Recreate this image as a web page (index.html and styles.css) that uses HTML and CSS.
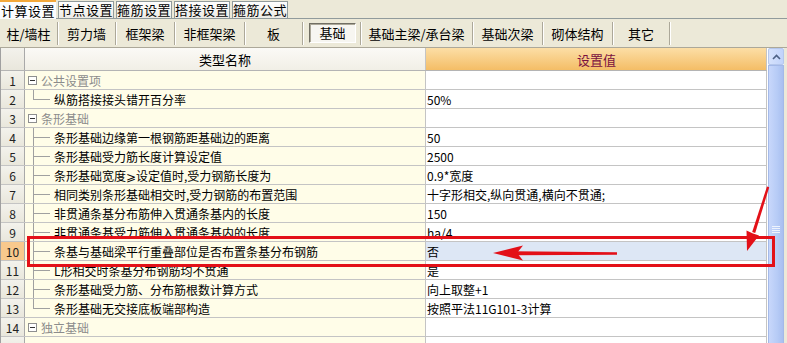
FILE: index.html
```html
<!DOCTYPE html>
<html lang="zh-CN">
<head>
  <meta charset="UTF-8" />
  <title>计算设置</title>
  <link rel="stylesheet" href="styles.css">
</head>
<body>
  <div class="tabs">
    <div class="tab active">计算设置</div>
    <div class="tab">节点设置</div>
    <div class="tab">箍筋设置</div>
    <div class="tab">搭接设置</div>
    <div class="tab">箍筋公式</div>
  </div>

  <div class="toolbar">
    <div class="tool w58">柱/墙柱</div>
    <div class="tool w58">剪力墙</div>
    <div class="tool w59">框架梁</div>
    <div class="tool w70">非框架梁</div>
    <div class="tool w58">板</div>
    <div class="tool w58"><span class="pressed">基础</span></div>
    <div class="tool w112">基础主梁/承台梁</div>
    <div class="tool w70">基础次梁</div>
    <div class="tool w70">砌体结构</div>
    <div class="tool w57">其它</div>
  </div>

  <div class="table-area">
    <div class="grid">
      <div class="row head">
        <div class="num"></div>
        <div class="name">类型名称</div>
        <div class="val">设置值</div>
      </div>
      <div class="row">
        <div class="num">1</div>
        <div class="name group"><span class="minus"></span>公共设置项</div>
        <div class="val"></div>
      </div>
      <div class="row">
        <div class="num">2</div>
        <div class="name"><span class="tree last"></span>纵筋搭接接头错开百分率</div>
        <div class="val">50%</div>
      </div>
      <div class="row">
        <div class="num">3</div>
        <div class="name group"><span class="minus"></span>条形基础</div>
        <div class="val"></div>
      </div>
      <div class="row">
        <div class="num">4</div>
        <div class="name"><span class="tree"></span>条形基础边缘第一根钢筋距基础边的距离</div>
        <div class="val">50</div>
      </div>
      <div class="row">
        <div class="num">5</div>
        <div class="name"><span class="tree"></span>条形基础受力筋长度计算设定值</div>
        <div class="val">2500</div>
      </div>
      <div class="row">
        <div class="num">6</div>
        <div class="name"><span class="tree"></span>条形基础宽度⩾设定值时,受力钢筋长度为</div>
        <div class="val">0.9*宽度</div>
      </div>
      <div class="row">
        <div class="num">7</div>
        <div class="name"><span class="tree"></span>相同类别条形基础相交时,受力钢筋的布置范围</div>
        <div class="val">十字形相交,纵向贯通,横向不贯通;</div>
      </div>
      <div class="row">
        <div class="num">8</div>
        <div class="name"><span class="tree"></span>非贯通条基分布筋伸入贯通条基内的长度</div>
        <div class="val">150</div>
      </div>
      <div class="row">
        <div class="num">9</div>
        <div class="name"><span class="tree"></span>非贯通条基受力筋伸入贯通条基内的长度</div>
        <div class="val">ha/4</div>
      </div>
      <div class="row current">
        <div class="num">10</div>
        <div class="name"><span class="tree"></span>条基与基础梁平行重叠部位是否布置条基分布钢筋</div>
        <div class="val">否</div>
      </div>
      <div class="row">
        <div class="num">11</div>
        <div class="name"><span class="tree"></span>L形相交时条基分布钢筋均不贯通</div>
        <div class="val">是</div>
      </div>
      <div class="row">
        <div class="num">12</div>
        <div class="name"><span class="tree"></span>条形基础受力筋、分布筋根数计算方式</div>
        <div class="val">向上取整+1</div>
      </div>
      <div class="row">
        <div class="num">13</div>
        <div class="name"><span class="tree last"></span>条形基础无交接底板端部构造</div>
        <div class="val">按照平法11G101-3计算</div>
      </div>
      <div class="row">
        <div class="num">14</div>
        <div class="name group"><span class="minus"></span>独立基础</div>
        <div class="val"></div>
      </div>
      <div class="row">
        <div class="num"></div>
        <div class="name"></div>
        <div class="val"></div>
      </div>
    </div>

    <div class="vscroll">
      <div class="sb-btn">
        <svg width="9" height="6" viewBox="0 0 9 6"><path d="M1 5 L4.5 1.5 L8 5" fill="none" stroke="#4d6185" stroke-width="1.6"/></svg>
      </div>
      <div class="sb-thumb"><span class="grip"></span></div>
    </div>
  </div>

  <svg class="marks" width="787" height="343" viewBox="0 0 787 343">
    <rect x="28.5" y="237.5" width="745" height="28" fill="none" stroke="#e31018" stroke-width="3"/>
    <polygon points="617,252.2 617,254.8 514,255.2 514,251.2" fill="#e31018"/>
    <polygon points="493,253 523,245.5 517,253 523,260.5" fill="#e31018"/>
    <polygon points="767,186.5 769.2,187.3 755.2,233 752.2,232" fill="#e31018"/>
    <polygon points="747,251 746.5,230.5 753,233.5 759,235.5" fill="#e31018"/>
  </svg>
</body>
</html>
```

FILE: styles.css
```css
* {
  box-sizing: border-box;
  margin: 0; padding: 0;
}

body {
  width: 787px;
  height: 343px;
  overflow: hidden;
  position: relative;
  background: #ece9d8;
  font-family: "Noto Sans CJK SC", "Noto Sans", sans-serif;
  font-size: 12px;
  color: #000;
}

/* top tabs */
.tabs {
  display: flex;
  align-items: flex-end;
  gap: 2px;
  height: 19px;
  border-bottom: 1px solid #919b9c;
}

.tab {
  width: 56px;
  height: 17px;
  line-height: 15px;
  text-align: center;
  font-size: 13px;
  letter-spacing: 0.5px;
  background: linear-gradient(#fefefe, #ecebe5);
  border: 1px solid #919b9c;
  border-bottom: none;
}

.tab.active {
  height: 19px;
  line-height: 18px;
  background: #fcfcfe;
  border: none;
  border-top: 2px solid #f4a83a;
  margin-bottom: -1px;
}

/* second row of buttons */
.toolbar {
  display: flex;
  align-items: center;
  height: 28px;
}

.tool {
  height: 23px;
  display: flex;
  align-items: center;
  justify-content: center;
  font-size: 13px;
  border-right: 1px solid #aca899;
  box-shadow: 1px 0 0 #fff;
}

.w57 { width: 57px; }
.w58 { width: 58px; }
.w59 { width: 59px; }
.w70 { width: 70px; }
.w112 { width: 112px; }

.pressed {
  width: 47px;
  height: 20px;
  line-height: 18px;
  text-align: center;
  margin-left: 2px;
  background: #f7f6f1;
  border: 1px solid;
  border-color: #716f64 #fff #fff #716f64;
  box-shadow: inset 1px 1px 0 #aca899;
}

/* table */
.table-area {
  display: flex;
  height: 296px;
  border-top: 1px solid #aca899;
}

.grid {
  width: 767px;
  border-left: 1px solid #a0a0a0;
  background: #fff;
}

.row {
  display: grid;
  grid-template-columns: 24px 401px 341px;
  height: 19px;
  border-bottom: 1px solid #c4c4c4;
}

.row > div {
  display: flex;
  align-items: center;
  white-space: nowrap;
  overflow: hidden;
}

.num {
  justify-content: center;
  background: linear-gradient(#f3f2ec, #e9e7dc);
  border-right: 1px solid #a9a9a9;
  color: #222;
}

.name {
  background: #fffde8;
  border-right: 1px solid #c4c4c4;
}

.val {
  padding-left: 1px;
  border-right: 1px solid #c4c4c4;
}

.row.head {
  height: 23px;
  border-bottom-color: #b4b4b4;
}

.head .name {
  justify-content: center;
  font-size: 13px;
  background: linear-gradient(#fbfaf6, #f1efe6);
}

.head .val {
  justify-content: center;
  font-size: 13px;
  color: #7a1040;
  background: linear-gradient(#fcdea6, #f4bd66);
}

.row.current .num {
  background: #f9c98d;
}

.row.current .val {
  background: #dde7f5;
}

.group {
  color: #8c8c8c;
}

.minus {
  width: 9px;
  height: 9px;
  margin: 0 4px 0 3px;
  border: 1px solid #8e8f8f;
  background: linear-gradient(#333, #333) center / 5px 1px no-repeat, #fff;
}

.tree {
  width: 17px;
  height: 100%;
  margin: 0 4px 0 8px;
  background:
    linear-gradient(#a0a0a0, #a0a0a0) left top / 1px 100% no-repeat,
    linear-gradient(#a0a0a0, #a0a0a0) left 0 top 9px / 100% 1px no-repeat;
}

.tree.last {
  background:
    linear-gradient(#a0a0a0, #a0a0a0) left top / 1px 10px no-repeat,
    linear-gradient(#a0a0a0, #a0a0a0) left 0 top 9px / 100% 1px no-repeat;
}

/* scrollbar */
.vscroll {
  width: 17px;
  display: flex;
  flex-direction: column;
  background: #eef3fd;
  border-left: 1px solid #fff;
}

.sb-btn {
  height: 17px;
  display: flex;
  align-items: center;
  justify-content: center;
  background: linear-gradient(90deg, #d6e2fc, #c1d3fb);
  border: 1px solid #b5c7ec;
  border-radius: 2px;
}

.sb-thumb {
  flex: 1;
  display: flex;
  justify-content: center;
  padding-top: 160px;
  background: linear-gradient(90deg, #c8d7fb, #b6cbf6 60%, #a9bff0);
  border: 1px solid #a4b9e8;
  border-bottom: none;
}

.grip {
  width: 8px;
  height: 7px;
  background: repeating-linear-gradient(#eef3fd 0 1px, transparent 1px 2px);
}

/* red annotation over the grid */
.marks {
  position: absolute;
  top: 0;
  left: 0;
  pointer-events: none;
}
```
